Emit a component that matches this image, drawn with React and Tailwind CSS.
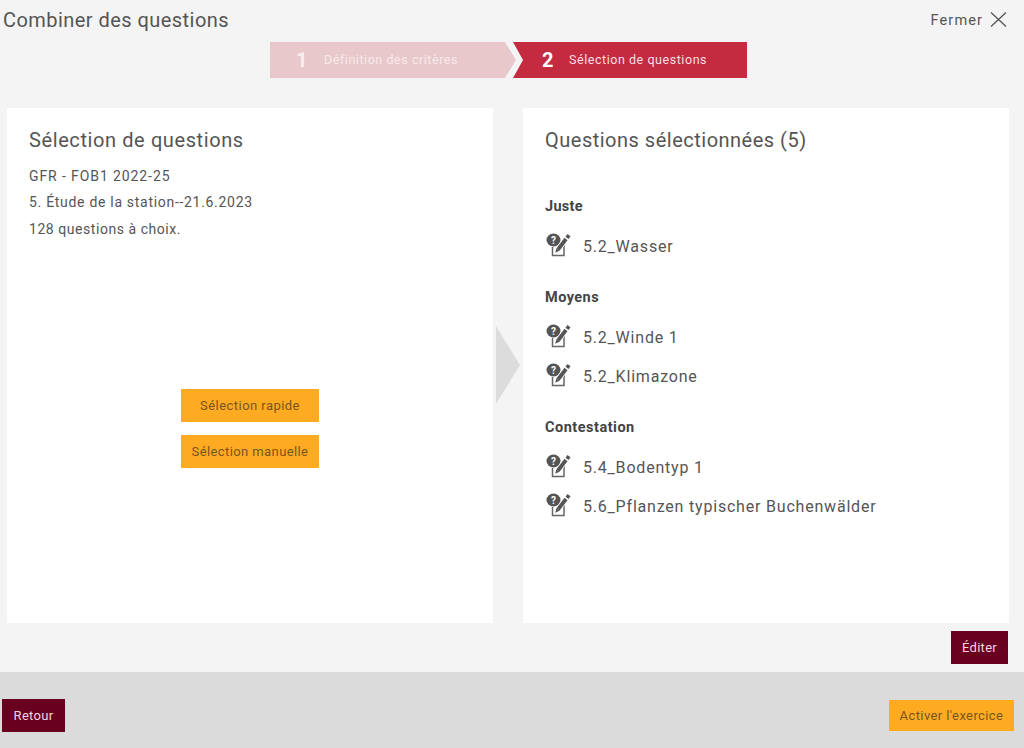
const groups = [
  { title: 'Juste', tracking: 'tracking-[0.3px]', items: ['5.2_Wasser'] },
  { title: 'Moyens', tracking: 'tracking-[0.45px]', items: ['5.2_Winde 1', '5.2_Klimazone'] },
  { title: 'Contestation', tracking: 'tracking-[0.5px]', items: ['5.4_Bodentyp 1', '5.6_Pflanzen typischer Buchenwälder'] },
];

function QuestionIcon() {
  return (
    <svg width="25" height="24" viewBox="0 0 25 24" className="mb-[4px] shrink-0">
      <path d="M7 11h11v11.500H6.500V14" fill="#fff" stroke="#666" strokeWidth="1.500" />
      <ellipse cx="7.500" cy="7" rx="7" ry="6.500" fill="#555" />
      <text x="7.500" y="10.500" textAnchor="middle" fontSize="10" fontWeight="700" fill="#fff" fontFamily="Roboto, sans-serif">?</text>
      <path d="M11.500 17L22 3.500" stroke="#fff" strokeWidth="5.500" fill="none" />
      <path d="M12 16.500L20 6" stroke="#555" strokeWidth="3.800" fill="none" />
      <path d="M21 4.800L23 2.200" stroke="#555" strokeWidth="3.800" fill="none" />
      <path d="M10.300 15.300l3.300 2.500-4.300 2z" fill="#555" />
    </svg>
  );
}

function Question({ label }) {
  return (
    <div className="flex h-[39px] items-center gap-[12px] pl-[1px]">
      <QuestionIcon />
      <span className="text-[16px] tracking-[0.8px] text-[#555]">{label}</span>
    </div>
  );
}

export default function App() {
  return (
    <div className="flex h-[748px] w-[1024px] flex-col overflow-hidden bg-[#f4f4f4] font-['Roboto',sans-serif] text-[#555]">
      <header className="flex h-[42px] items-center justify-between pl-[3px] pr-[17px]">
        <h1 className="mb-[2px] text-[20px] leading-none tracking-[0.45px] text-[#555]">Combiner des questions</h1>
        <button className="flex items-center gap-[7px] text-[14.500px] tracking-[1.1px] text-[#555]">
          Fermer
          <svg width="17" height="17" viewBox="0 0 17 17" className="mb-[4px]">
            <path d="M1 1.500l15 14M16 1.500l-15 14" stroke="#555" strokeWidth="1.300" fill="none" />
          </svg>
        </button>
      </header>

      <div className="ml-[270px] flex h-[36px] w-[477px]">
        <div className="flex w-[246px] items-center bg-[#e8c8cb] pl-[26px] [clip-path:polygon(0_0,235px_0,100%_50%,235px_100%,0_100%)]">
          <span className="w-[28px] text-[20px] font-bold text-[#fbeeee]">1</span>
          <span className="text-[12.500px] tracking-[0.55px] text-[#f8e8ea]">Définition des critères</span>
        </div>
        <div className="ml-[-3px] flex w-[234px] items-center bg-[#c42b40] pl-[29px] [clip-path:polygon(0_0,100%_0,100%_100%,0_100%,10px_50%)]">
          <span className="w-[27px] text-[20px] font-bold text-white">2</span>
          <span className="text-[12.500px] tracking-[0.55px] text-[#f9dfe2]">Sélection de questions</span>
        </div>
      </div>

      <main className="mt-[30px] flex h-[515px] pl-[7px]">
        <section className="flex w-[486px] flex-col bg-white pl-[22px] pt-[20px]">
          <h2 className="text-[20px] leading-[24px] tracking-[0.6px] text-[#555]">Sélection de questions</h2>
          <div className="mt-[10.500px] text-[14px] leading-[26.500px] text-[#555]">
            <p className="tracking-[0.9px]">GFR - FOB1 2022-25</p>
            <p className="tracking-[0.7px]">5. Étude de la station--21.6.2023</p>
            <p className="tracking-[0.55px]">128 questions à choix.</p>
          </div>
          <div className="ml-[152px] mt-[146.500px] flex w-[138px] flex-col gap-[13px]">
            <button className="h-[33px] bg-[#ffab22] pt-[1px] text-[13px] tracking-[0.45px] text-[#77551f]">Sélection rapide</button>
            <button className="h-[33px] bg-[#ffab22] pt-[1px] text-[13px] tracking-[0.4px] text-[#77551f]">Sélection manuelle</button>
          </div>
        </section>

        <div className="flex w-[30px] items-center justify-center">
          <svg width="24" height="78" viewBox="0 0 24 78" className="mb-[1px]">
            <path d="M0 0l24 39L0 78z" fill="#dcdcdc" />
          </svg>
        </div>

        <section className="w-[486px] bg-white pl-[22px] pt-[20px]">
          <h2 className="text-[20px] leading-[24px] tracking-[0.5px] text-[#555]">Questions sélectionnées (5)</h2>
          <div className="mt-[45px] flex flex-col gap-[22px]">
            {groups.map((group) => (
              <div key={group.title}>
                <h3 className={`mb-[10px] text-[14.500px] font-bold leading-[20px] text-[#444] ${group.tracking}`}>{group.title}</h3>
                {group.items.map((item) => (
                  <Question key={item} label={item} />
                ))}
              </div>
            ))}
          </div>
        </section>
      </main>

      <div className="flex h-[49px] items-start justify-end pr-[16px] pt-[8px]">
        <button className="h-[33px] w-[57px] bg-[#690020] text-[13px] tracking-[0.3px] text-[#f0d5e0]">Éditer</button>
      </div>

      <footer className="flex flex-1 items-center justify-between bg-[#dbdbdb] pl-[2px] pr-[10px] pt-[11px]">
        <button className="h-[33px] w-[63px] bg-[#690020] text-[13px] tracking-[0.3px] text-[#f0d5e0]">Retour</button>
        <button className="h-[31px] w-[125px] bg-[#ffab22] text-[13px] tracking-[0.4px] text-[#77551f]">Activer l'exercice</button>
      </footer>
    </div>
  );
}
